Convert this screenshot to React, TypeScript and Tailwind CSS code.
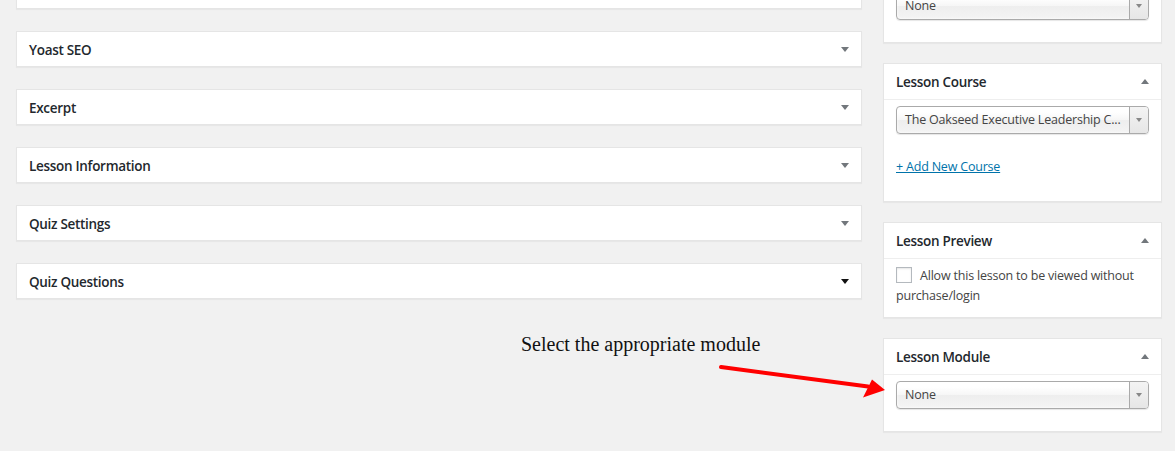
import React from "react";

const Down = ({ dark }: { dark?: boolean }) => (
  <svg width="8" height="5" viewBox="0 0 8 5" className="shrink-0">
    <path d="M0 0H8L4 5Z" fill={dark ? "#111111" : "#72777c"} />
  </svg>
);

const Up = () => (
  <svg width="8" height="5" viewBox="0 0 8 5" className="shrink-0">
    <path d="M0 5H8L4 0Z" fill="#72777c" />
  </svg>
);

const LeftPanel = ({ title, dark }: { title: string; dark?: boolean }) => (
  <div className="h-[36px] bg-white border border-[#e5e5e5] shadow-[0_1px_1px_rgba(0,0,0,0.04)] flex items-center justify-between pl-[12px] pr-[12px]">
    <span className="pt-[3px] text-[13.5px] tracking-[-0.3px] font-semibold text-[#23282d]">{title}</span>
    {title && <Down dark={dark} />}
  </div>
);

const Select = ({ value }: { value: string }) => (
  <div className="h-[28px] w-full flex items-stretch rounded-[4px] border border-[#aaaaaa] bg-[linear-gradient(#ffffff_20%,#f6f6f6_50%,#eeeeee_52%,#f4f4f4_100%)] shadow-[0_0_3px_#fff_inset,0_1px_1px_rgba(0,0,0,0.1)] overflow-hidden">
    <div className="flex-1 flex items-center pl-[8px] pt-[1px] text-[12.5px] tracking-[-0.2px] text-[#444] whitespace-nowrap overflow-hidden">
      {value}
    </div>
    <div className="w-[19px] border-l border-[#aaaaaa] flex items-center justify-center bg-[linear-gradient(#f4f4f4,#e6e6e6)]">
      <svg width="6" height="4" viewBox="0 0 6 4">
        <path d="M0 0H6L3 4Z" fill="#888" />
      </svg>
    </div>
  </div>
);

const RightPanel = ({ title, children }: { title?: string; children: React.ReactNode }) => (
  <div className="bg-white border border-[#e5e5e5] shadow-[0_1px_1px_rgba(0,0,0,0.04)]">
    {title && (
      <div className="h-[36px] border-b border-[#eeeeee] flex items-center justify-between px-[12px]">
        <span className="pt-[2px] text-[13.5px] tracking-[-0.3px] font-semibold text-[#23282d]">{title}</span>
        <Up />
      </div>
    )}
    {children}
  </div>
);

export default function App() {
  return (
    <div className="relative w-[1175px] h-[451px] overflow-hidden bg-[#f1f1f1] flex items-start font-['Open_Sans',sans-serif]">
      <div className="ml-[16px] mt-[-27px] w-[846px] flex flex-col gap-[22px]">
        <LeftPanel title="" />
        <LeftPanel title="Yoast SEO" />
        <LeftPanel title="Excerpt" />
        <LeftPanel title="Lesson Information" />
        <LeftPanel title="Quiz Settings" />
        <LeftPanel title="Quiz Questions" dark />
      </div>

      <div className="ml-[21px] mt-[-15px] w-[279px] flex flex-col gap-[20px]">
        <RightPanel>
          <div className="px-[12px] pt-[6px] pb-[22px]">
            <Select value="None" />
          </div>
        </RightPanel>

        <RightPanel title="Lesson Course">
          <div className="px-[12px] pt-[6px] pb-[24px]">
            <Select value="The Oakseed Executive Leadership C..." />
            <div className="mt-[23px] h-[20px] leading-[20px] text-[12.5px] tracking-[-0.2px]">
              <span className="text-[#0073aa] underline">+ Add New Course</span>
            </div>
          </div>
        </RightPanel>

        <RightPanel title="Lesson Preview">
          <div className="px-[12px] pt-[7px] pb-[11px] text-[12.5px] tracking-[-0.2px] leading-[20px] text-[#444]">
            <span className="inline-block align-[-3px] w-[16px] h-[16px] border border-[#b4b9be] bg-white shadow-[inset_0_1px_2px_rgba(0,0,0,0.1)] mr-[8px]" />
            Allow this lesson to be viewed without purchase/login
          </div>
        </RightPanel>

        <RightPanel title="Lesson Module">
          <div className="px-[12px] pt-[6px] pb-[22px]">
            <Select value="None" />
          </div>
        </RightPanel>
      </div>

      <div className="absolute left-[521px] top-[332px] leading-[24px] text-[20px] text-[#111] font-['Liberation_Serif',serif] whitespace-nowrap">
        Select the appropriate module
      </div>

      <svg className="absolute left-0 top-0" width="1175" height="451" viewBox="0 0 1175 451">
        <line x1="721" y1="367" x2="868" y2="386.5" stroke="#ff0000" strokeWidth="4" strokeLinecap="round" />
        <polygon points="885,390 872,379.5 863,397.5" fill="#ff0000" />
      </svg>
    </div>
  );
}
